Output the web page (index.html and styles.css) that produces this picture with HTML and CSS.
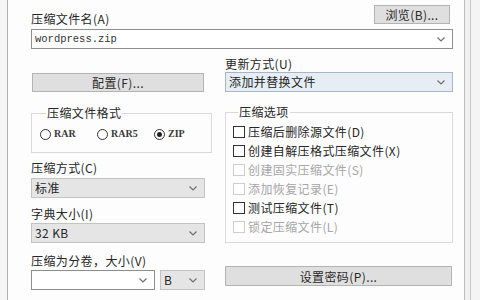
FILE: index.html
```html
<!DOCTYPE html>
<html lang="zh-CN">
<head>
    <meta charset="UTF-8">
    <title>压缩文件名和参数</title>
    <link rel="stylesheet" href="styles.css">
</head>
<body>
    <div class="edge-left"></div>
    <div class="window">
        <div class="top-row">
            <span class="label">压缩文件名(A)</span>
            <button class="btn btn-browse">浏览(B)...</button>
        </div>
        <div class="field field-name">
            <span class="mono">wordpress.zip</span>
            <svg class="chev" width="8" height="5" viewBox="0 0 8 5"><polyline points="0.5,0.5 4,4 7.5,0.5" /></svg>
        </div>

        <div class="columns">
            <!-- Left column -->
            <div class="col">
                <button class="btn btn-profile">配置(F)...</button>

                <fieldset class="group group-format">
                    <legend>压缩文件格式</legend>
                    <div class="radios">
                        <label class="radio"><span class="dot"></span><span class="latin">RAR</span></label>
                        <label class="radio"><span class="dot"></span><span class="latin">RAR5</span></label>
                        <label class="radio checked"><span class="dot"></span><span class="latin">ZIP</span></label>
                    </div>
                </fieldset>

                <div class="label label-method">压缩方式(C)</div>
                <div class="field select">
                    <span>标准</span>
                    <svg class="chev" width="8" height="5" viewBox="0 0 8 5"><polyline points="0.5,0.5 4,4 7.5,0.5" /></svg>
                </div>

                <div class="label label-dict">字典大小(I)</div>
                <div class="field select">
                    <span>32 KB</span>
                    <svg class="chev" width="8" height="5" viewBox="0 0 8 5"><polyline points="0.5,0.5 4,4 7.5,0.5" /></svg>
                </div>

                <div class="label label-split">压缩为分卷，大小(V)</div>
                <div class="split-row">
                    <div class="field split-size">
                        <span></span>
                        <svg class="chev" width="8" height="5" viewBox="0 0 8 5"><polyline points="0.5,0.5 4,4 7.5,0.5" /></svg>
                    </div>
                    <div class="field select split-unit">
                        <span>B</span>
                        <svg class="chev" width="8" height="5" viewBox="0 0 8 5"><polyline points="0.5,0.5 4,4 7.5,0.5" /></svg>
                    </div>
                </div>
            </div>

            <!-- Right column -->
            <div class="col">
                <div class="label label-update">更新方式(U)</div>
                <div class="field select select-blue">
                    <span>添加并替换文件</span>
                    <svg class="chev" width="8" height="5" viewBox="0 0 8 5"><polyline points="0.5,0.5 4,4 7.5,0.5" /></svg>
                </div>

                <fieldset class="group group-options">
                    <legend>压缩选项</legend>
                    <label class="check"><span class="box"></span>压缩后删除源文件(D)</label>
                    <label class="check"><span class="box"></span>创建自解压格式压缩文件(X)</label>
                    <label class="check disabled"><span class="box"></span>创建固实压缩文件(S)</label>
                    <label class="check disabled"><span class="box"></span>添加恢复记录(E)</label>
                    <label class="check"><span class="box"></span>测试压缩文件(T)</label>
                    <label class="check disabled"><span class="box"></span>锁定压缩文件(L)</label>
                </fieldset>

                <button class="btn btn-password">设置密码(P)...</button>
            </div>
        </div>
    </div>
    <div class="edge-right"></div>
</body>
</html>
```

FILE: styles.css
```css
body {
    margin: 0;
    display: flex;
    height: 300px;
    overflow: hidden;
    background-color: #f3f4f3;
    font-family: "Noto Sans CJK SC", "Noto Sans", sans-serif;
    font-size: 12px;
    color: #262626;
}

.edge-left {
    width: 7px;
    background-color: #f4f5f4;
}

.window {
    width: 458px;
    padding-left: 23px;
    box-sizing: border-box;
    background-color: #fdfdfd;
    border-left: 1px solid #aab6aa;
    border-right: 1px solid #bcbcbc;
}

.edge-right {
    width: 5px;
    background-color: #f1f1f1;
    border-right: 1px solid #c6c6c6;
}

.label,
.group legend,
.check {
    letter-spacing: 0.4px;
}

.label {
    line-height: 14px;
    white-space: nowrap;
}

.top-row {
    width: 421px;
    margin-top: 5px;
    display: flex;
    justify-content: space-between;
}

.top-row .label {
    align-self: flex-end;
    margin-bottom: -2px;
}

.btn {
    margin: 0;
    padding: 0;
    height: 19px;
    font-family: inherit;
    font-size: 12px;
    line-height: 17px;
    letter-spacing: 0.4px;
    color: #2a2a2a;
    background-color: #dfdfdf;
    border: 1px solid #b3b3b3;
    border-radius: 0;
}

.btn-browse {
    width: 76px;
    margin-right: 2px;
}

.field {
    height: 20px;
    box-sizing: border-box;
    display: flex;
    align-items: center;
    justify-content: space-between;
    padding: 0 7px 0 3px;
    background-color: #ffffff;
    border: 1px solid #8e8e8e;
    line-height: 18px;
    white-space: nowrap;
    letter-spacing: 0.4px;
}

.field-name {
    width: 422px;
    margin-top: 5px;
}

.mono {
    font-family: "Liberation Mono", monospace;
    font-size: 10.5px;
    letter-spacing: 0;
    color: #333;
}

.chev polyline {
    fill: none;
    stroke: #6f6f6f;
    stroke-width: 1.2;
}

.columns {
    display: grid;
    grid-template-columns: 174px 228px;
    column-gap: 20px;
    width: 422px;
}

.col {
    display: flex;
    flex-direction: column;
}

.btn-profile {
    width: 172px;
    margin: 24px 0 0 1px;
}

.label-update {
    margin-top: 8px;
}

.select {
    background-color: #e5e5e5;
    border-color: #c3c3c3;
}

.select-blue {
    margin-top: 1px;
    background-color: #e6edf5;
    border-color: #a9b5c2;
}

.group {
    margin: 0;
    padding: 0;
    border: 1px solid #dadada;
}

.group legend {
    padding: 0 1px;
    line-height: 14px;
}

.group-format {
    margin-top: 14px;
    height: 47px;
    box-sizing: border-box;
    padding-left: 8px;
}

.group-format legend {
    margin-left: 6px;
}

.radios {
    display: flex;
    margin-top: 7px;
}

.radio {
    width: 57px;
    display: flex;
    align-items: center;
    gap: 3px;
    line-height: 14px;
}

.dot {
    width: 11px;
    height: 11px;
    box-sizing: border-box;
    border: 1px solid #333;
    border-radius: 50%;
    display: flex;
    align-items: center;
    justify-content: center;
    background-color: #fff;
}

.radio.checked .dot::after {
    content: "";
    width: 5px;
    height: 5px;
    border-radius: 50%;
    background-color: #222;
}

.latin {
    font-family: "Liberation Serif", serif;
    font-size: 10px;
    font-weight: bold;
    color: #3a3a3a;
}

.label-method {
    margin-top: 8px;
}

.label-method + .select {
    margin-top: 3px;
}

.label-dict {
    margin-top: 9px;
}

.label-dict + .select {
    margin-top: 2px;
}

.label-split {
    margin-top: 11px;
}

.split-row {
    display: flex;
    gap: 5px;
    margin-top: 2px;
}

.split-size {
    width: 124px;
}

.split-unit {
    width: 45px;
}

.group-options {
    margin-top: 13px;
    height: 138px;
    box-sizing: border-box;
    padding: 3px 0 0 7px;
}

.group-options legend {
    margin-left: 5px;
}

.check {
    height: 19px;
    display: flex;
    align-items: center;
    gap: 3px;
    white-space: nowrap;
}

.box {
    width: 12px;
    height: 12px;
    box-sizing: border-box;
    border: 1px solid #333;
    background-color: #fff;
}

.check.disabled {
    color: #a6a6a6;
}

.check.disabled .box {
    border-color: #cdcdcd;
}

.btn-password {
    width: 227px;
    height: 20px;
    margin-top: 23px;
}
```
